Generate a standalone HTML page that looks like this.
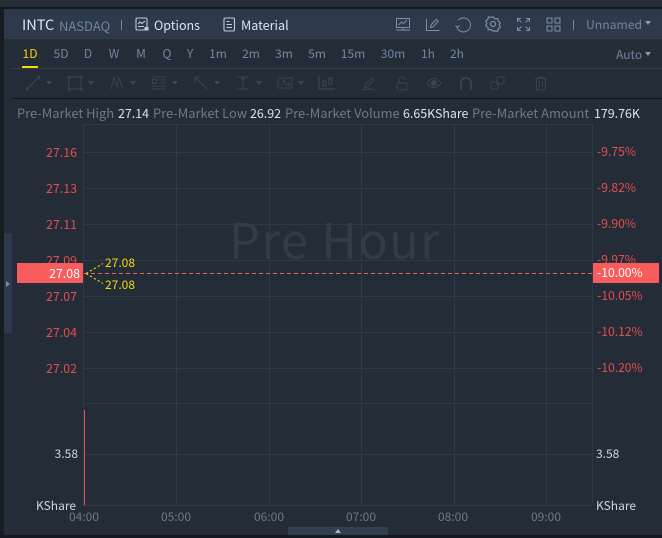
<!DOCTYPE html>
<html><head><meta charset="utf-8"><style>
html,body{margin:0;padding:0;background:#242c37}
#r{position:relative;width:662px;height:538px;overflow:hidden;background:#242c37;font-family:"Noto Sans CJK SC","Liberation Sans",sans-serif;font-size:12px}
.t{position:absolute;white-space:nowrap;line-height:16px;height:16px}
.tab{color:#7187a3;top:46px;transform:translateX(-50%)}
.lr{color:#e04f50;text-align:right;right:585px;font-size:12.400px}
.rr{color:#e04f50;left:597px;font-size:12.150px}
.x{color:#6d7986;top:509px;transform:translateX(-50%)}
.h{position:absolute;left:83px;width:509px;height:1px;background:#2e3b47}
.v{position:absolute;top:124px;height:381px;width:1px;background:#2e3b47}
.tri{position:absolute;width:0;height:0;border-left:3.500px solid transparent;border-right:3.500px solid transparent;border-top:4px solid #3a4654}
.l{color:#6d7986;top:105px;font-size:12.900px}
.n{color:#dce2e8;top:105px;font-size:12.400px}
svg{position:absolute;overflow:visible;fill:none}
</style></head><body><div id="r">
<div style="position:absolute;left:0;top:0;width:662px;height:7px;background:#272e3a"></div>
<div style="position:absolute;left:0;top:7px;width:662px;height:2px;background:#14191f"></div>
<div style="position:absolute;left:0;top:9px;width:4px;height:529px;background:#171c23"></div>
<div style="position:absolute;left:4px;top:9px;width:658px;height:30px;background:#2e3a4b"></div>
<div style="position:absolute;left:4px;top:233px;width:8px;height:100px;background:#2e3a4b"></div>
<div style="position:absolute;left:6px;top:281px;width:0;height:0;border-left:4px solid #7c8a9b;border-top:3px solid transparent;border-bottom:3px solid transparent"></div>

<div class="t" style="left:22px;top:17px;color:#dfe5ec;font-size:14.500px">INTC</div>
<div class="t" style="left:59px;top:18px;color:#71849e;font-size:13px">NASDAQ</div>
<div style="position:absolute;left:121px;top:20px;width:1px;height:10px;background:#73859b"></div>
<svg style="left:135px;top:17px" width="14" height="15" stroke="#c3ccd6" stroke-width="1.100"><rect x="1" y="1" width="11" height="12" rx="1.500"/><path d="M3 7l2-2 2 1.500 3-2.500M3 9.500h6"/><rect x="9.500" y="10" width="4" height="3.500" fill="#c3ccd6" stroke="none"/></svg>
<div class="t" style="left:154px;top:17px;color:#dbe2ea;font-size:12.500px">Options</div>
<svg style="left:223px;top:17px" width="13" height="15" stroke="#c3ccd6" stroke-width="1.100"><rect x="1" y="1" width="10.500" height="13" rx="1.500"/><path d="M3.500 4.500h3M3.500 7.500h5.500M3.500 10.500h5.500"/></svg>
<div class="t" style="left:241px;top:17px;color:#dbe2ea;font-size:12.600px">Material</div>

<svg style="left:395px;top:17px" width="16" height="15" stroke="#7d8fa5" stroke-width="1"><rect x="1.500" y="1.500" width="13" height="9"/><path d="M3.500 8l3-3 2 1.500 3.500-3.500M1 13h14M8 10.500v2.500"/></svg>
<svg style="left:425px;top:17px" width="15" height="15" stroke="#7d8fa5" stroke-width="1"><path d="M1.500 2v11.500h13M5.500 10.500l.7-2.700 5-5.300 2 1.900-5 5.300z"/></svg>
<svg style="left:455px;top:17px" width="16" height="15" stroke="#7d8fa5" stroke-width="1"><path d="M3.500 3a7 7 0 1 1-1.300 8M.5 8.500l2 2 2-2"/></svg>
<svg style="left:485px;top:16px" width="16" height="16" stroke="#7d8fa5" stroke-width="1.200"><path d="M8 1l2 1.700 2.600-.2.600 2.500 2 1.700-1 2.300 1 2.300-2 1.500-.6 2.400-2.600-.2L8 15l-2-1.500-2.600.2-.6-2.400-2-1.500 1-2.300-1-2.300 2-1.700.6-2.500 2.600.2z"/><circle cx="8" cy="8" r="2.500"/></svg>
<svg style="left:516px;top:17px" width="15" height="15" stroke="#7d8fa5" stroke-width="1"><path d="M1.500 5V1.500H5M1.500 1.500l4 4M13.500 5V1.500H10M13.500 1.500l-4 4M1.500 10v3.500H5M1.500 13.500l4-4M13.500 10v3.500H10M13.500 13.500l-4-4"/></svg>
<svg style="left:546px;top:17px" width="15" height="15" stroke="#7d8fa5" stroke-width="1"><rect x="1" y="1" width="5" height="5"/><rect x="9" y="1" width="5" height="5"/><rect x="1" y="9" width="5" height="5"/><rect x="9" y="9" width="5" height="5"/></svg>
<div style="position:absolute;left:573px;top:20px;width:1px;height:10px;background:#73859b"></div>
<div class="t" style="left:586px;top:16px;color:#71849e;font-size:12.200px">Unnamed</div>
<div class="tri" style="left:645px;top:21px;border-top-color:#8b9aab"></div>

<div class="t tab" style="left:30px;color:#f2d90b">1D</div>
<div class="t tab" style="left:61px">5D</div>
<div class="t tab" style="left:88px">D</div>
<div class="t tab" style="left:114px">W</div>
<div class="t tab" style="left:141px">M</div>
<div class="t tab" style="left:167px">Q</div>
<div class="t tab" style="left:190px">Y</div>
<div class="t tab" style="left:218px">1m</div>
<div class="t tab" style="left:251px">2m</div>
<div class="t tab" style="left:284px">3m</div>
<div class="t tab" style="left:317px">5m</div>
<div class="t tab" style="left:353px">15m</div>
<div class="t tab" style="left:393px">30m</div>
<div class="t tab" style="left:428px">1h</div>
<div class="t tab" style="left:457px">2h</div>
<div class="t" style="left:616px;top:47px;color:#71849e">Auto</div>
<div class="tri" style="left:645px;top:52px;border-top-color:#8b9aab"></div>
<div style="position:absolute;left:22px;top:66px;width:16px;height:2px;background:#f5dd00"></div>
<div style="position:absolute;left:12px;top:68px;width:650px;height:1px;background:#323e4c"></div>
<div style="position:absolute;left:12px;top:98px;width:650px;height:1px;background:#12161c"></div>

<svg style="left:25px;top:75px" width="16" height="16" stroke="#38444f" stroke-width="1.100"><path d="M2 14L14 2"/><circle cx="2" cy="14" r="1" fill="#38444f"/><circle cx="14" cy="2" r="1" fill="#38444f"/></svg><div class="tri" style="left:46px;top:81px"></div>
<svg style="left:67px;top:75px" width="16" height="16" stroke="#38444f" stroke-width="1.100"><rect x="2" y="2" width="12" height="12"/><circle cx="2" cy="2" r="1" fill="#38444f"/><circle cx="14" cy="2" r="1" fill="#38444f"/><circle cx="2" cy="14" r="1" fill="#38444f"/><circle cx="14" cy="14" r="1" fill="#38444f"/></svg><div class="tri" style="left:88px;top:81px"></div>
<svg style="left:109px;top:75px" width="16" height="16" stroke="#38444f" stroke-width="1.100"><path d="M2 14L5 3l3 9 2-9 4 11"/></svg><div class="tri" style="left:130px;top:81px"></div>
<svg style="left:152px;top:76px" width="15" height="14" stroke="#38444f" stroke-width="1"><path d="M0 1h14M7 4h7M7 7h7M0 10h14M0 13h14"/><rect x="0.500" y="3.500" width="4" height="4"/></svg><div class="tri" style="left:172px;top:81px"></div>
<svg style="left:194px;top:76px" width="14" height="14" stroke="#38444f" stroke-width="1.100"><path d="M1 1l12 12M1 1v6M1 1h6"/></svg><div class="tri" style="left:214px;top:81px"></div>
<svg style="left:236px;top:76px" width="14" height="14" stroke="#38444f" stroke-width="1.100"><path d="M1 1h12M1 13h12M7 1v12M5 3.500l2-2 2 2"/></svg><div class="tri" style="left:256px;top:81px"></div>
<svg style="left:277px;top:76px" width="16" height="14" stroke="#38444f" stroke-width="1"><rect x="1" y="2" width="14" height="10"/><path d="M5 9l2-5 2 5M10 7h3v2h-3"/></svg><div class="tri" style="left:298px;top:81px"></div>
<svg style="left:318px;top:75px" width="18" height="16" stroke="#38444f" stroke-width="1.200"><path d="M1 1v13h16"/><rect x="5" y="6" width="3" height="5"/><rect x="11" y="3" width="3" height="6"/></svg>
<svg style="left:362px;top:76px" width="15" height="15" stroke="#38444f" stroke-width="1.100"><path d="M2 12l1-3 7-7 2 2-7 7zM1 14c4 0 5-2 8-1l4 1"/></svg>
<svg style="left:396px;top:76px" width="12" height="15" stroke="#38444f" stroke-width="1.100"><rect x="1" y="7" width="10" height="7" rx="1"/><path d="M3 7V4a3 3 0 0 1 6 0"/></svg>
<svg style="left:426px;top:77px" width="16" height="12" stroke="#38444f" stroke-width="1.100"><path d="M1 6c4-6 10-6 14 0-4 6-10 6-14 0z"/><circle cx="8" cy="6" r="2.500" fill="#38444f"/></svg>
<svg style="left:459px;top:76px" width="14" height="15" stroke="#38444f" stroke-width="1.800"><path d="M2 14V7a5 5 0 0 1 10 0v7"/></svg>
<svg style="left:490px;top:75px" width="16" height="16" stroke="#38444f" stroke-width="1.100"><rect x="1" y="7" width="7" height="7" rx="1"/><rect x="7" y="2" width="7" height="7" rx="1"/></svg>
<svg style="left:534px;top:76px" width="14" height="15" stroke="#38444f" stroke-width="1.100"><path d="M1 2.500h12M5 2.500V1h4v1.500M2.500 2.500V14h9V2.500M5.500 5v6M8.500 5v6"/></svg>

<div class="t l" style="left:17px">Pre-Market High</div><div class="t n" style="left:118px">27.14</div>
<div class="t l" style="left:153px">Pre-Market Low</div><div class="t n" style="left:250px">26.92</div>
<div class="t l" style="left:285px">Pre-Market Volume</div><div class="t n" style="left:403px">6.65KShare</div>
<div class="t l" style="left:472px">Pre-Market Amount</div><div class="t n" style="left:594px">179.76K</div>

<div class="h" style="top:124px"></div><div class="h" style="top:152px"></div><div class="h" style="top:188px"></div><div class="h" style="top:260px"></div><div class="h" style="top:224px"></div><div class="h" style="top:296px"></div><div class="h" style="top:332px"></div><div class="h" style="top:368px"></div><div class="h" style="top:403px"></div><div class="h" style="top:454px"></div><div class="h" style="top:505px"></div>
<div class="v" style="left:83px"></div><div class="v" style="left:176px"></div><div class="v" style="left:269px"></div><div class="v" style="left:361px"></div><div class="v" style="left:454px"></div><div class="v" style="left:546px"></div><div class="v" style="left:592px"></div>

<div class="t" style="left:229px;top:212px;height:54px;line-height:54px;font-size:49px;color:#323c48;letter-spacing:1.200px">Pre Hour</div>

<div class="t lr" style="top:144px">27.16</div><div class="t lr" style="top:180px">27.13</div><div class="t lr" style="top:216px">27.11</div><div class="t lr" style="top:252px">27.09</div><div class="t lr" style="top:288px">27.07</div><div class="t lr" style="top:324px">27.04</div><div class="t lr" style="top:360px">27.02</div>
<div class="t rr" style="top:144px">-9.75%</div><div class="t rr" style="top:180px">-9.82%</div><div class="t rr" style="top:216px">-9.90%</div><div class="t rr" style="top:252px">-9.97%</div><div class="t rr" style="top:288px">-10.05%</div><div class="t rr" style="top:324px">-10.12%</div><div class="t rr" style="top:360px">-10.20%</div>

<div style="position:absolute;left:17px;top:263px;width:66px;height:20px;background:#f85c5c"></div>
<div class="t" style="left:17px;width:63px;top:265px;text-align:right;color:#fff;font-size:12.400px">27.08</div>
<div style="position:absolute;left:593px;top:263px;width:66px;height:20px;background:#f85c5c"></div>
<div class="t" style="left:597px;top:265px;color:#fff;font-size:12.150px">-10.00%</div>
<svg style="left:84px;top:273px" width="508" height="1"><path d="M0 .5H508" stroke="#d9686b" stroke-width="1" stroke-dasharray="4 3"/></svg>
<svg style="left:83px;top:262px" width="24" height="24" stroke="#f2d90b" stroke-width="1" stroke-dasharray="2.500 2"><path d="M3 11.500L20 1.500M3 11.500L20 21.500"/></svg>
<div class="t" style="left:105px;top:255px;color:#f2d90b">27.08</div>
<div class="t" style="left:105px;top:277px;color:#f2d90b">27.08</div>

<div style="position:absolute;left:84px;top:410px;width:1px;height:95px;background:#e8494c"></div>
<div class="t" style="right:584px;top:446px;color:#cfd5dc">3.58</div>
<div class="t" style="left:596px;top:446px;color:#cfd5dc">3.58</div>
<div class="t" style="left:36px;top:498px;color:#cfd5dc">KShare</div>
<div class="t" style="left:596px;top:498px;color:#cfd5dc">KShare</div>
<div class="t x" style="left:84px">04:00</div><div class="t x" style="left:176px">05:00</div><div class="t x" style="left:269px">06:00</div><div class="t x" style="left:361px">07:00</div><div class="t x" style="left:453px">08:00</div><div class="t x" style="left:546px">09:00</div>
<div style="position:absolute;left:288px;top:527px;width:100px;height:8px;background:#323f50"></div>
<div style="position:absolute;left:335px;top:529px;width:0;height:0;border-left:3px solid transparent;border-right:3px solid transparent;border-bottom:4px solid #aeb8c4"></div>
<div style="position:absolute;left:0;top:535px;width:662px;height:3px;background:#14191f"></div>
</div></body></html>
